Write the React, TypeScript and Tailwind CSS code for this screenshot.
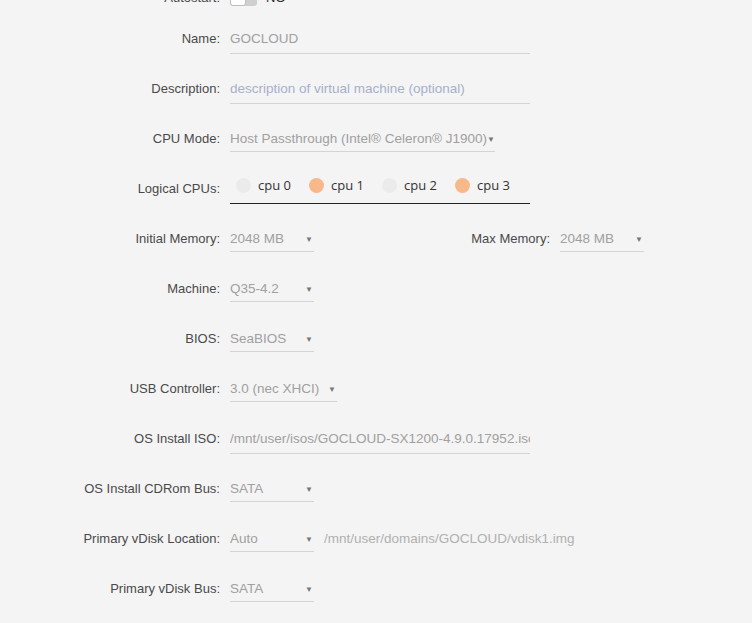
import React from "react";

const font = { fontFamily: '"Liberation Sans", Arial, sans-serif' };

function Label({ children }: { children: React.ReactNode }) {
  return (
    <div className="w-[220px] shrink-0 text-right text-[13px] text-[#4a4a4a]">{children}</div>
  );
}

function Select({ value, width }: { value: string; width: string }) {
  return (
    <div className={`${width} ml-[10px] h-[26px] pt-[2px] flex items-center justify-between border-b border-[#d4d4d4] text-[13.5px] text-[#a0a0a0]`}>
      <span className="whitespace-nowrap">{value}</span>
      <span className="text-[8px] text-[#777] pr-[1px]">▼</span>
    </div>
  );
}

function Text({ value, color = "text-[#a0a0a0]" }: { value: string; color?: string }) {
  return (
    <div className={`w-[300px] ml-[10px] h-[29px] pt-[2px] flex items-center overflow-hidden border-b border-[#d4d4d4] text-[13.5px] ${color}`}>
      <span className="whitespace-nowrap">{value}</span>
    </div>
  );
}

function Row({ children, h = "h-[50px]" }: { children: React.ReactNode; h?: string }) {
  return <div className={`flex items-center ${h}`}>{children}</div>;
}

function Cpu({ on, label }: { on: boolean; label: string }) {
  return (
    <div className="flex items-center">
      <span className={`w-[15px] h-[15px] rounded-full ${on ? "bg-[#f8b88a]" : "bg-[#ebebeb]"}`} />
      <span
        className="ml-[7px] w-[51px] text-[13px] text-[#333]"
        style={{ fontFamily: '"Open Sans", sans-serif' }}
      >
        {label}
      </span>
    </div>
  );
}

export default function App() {
  return (
    <div className="w-[752px] h-[623px] overflow-hidden bg-[#f4f4f4]" style={font}>
      <div className="-mt-[18px]">
        <Row h="h-[32px]">
          <Label>Autostart:</Label>
          <div className="ml-[10px] flex items-center">
            <div className="w-[27px] h-[16px] rounded-[3px] bg-[#cfcfcf] flex items-center">
              <div className="w-[16px] h-[16px] rounded-[3px] bg-white border border-[#bdbdbd]" />
            </div>
            <span className="ml-[9px] text-[13px] text-[#333]">NO</span>
          </div>
        </Row>
        <Row>
          <Label>Name:</Label>
          <Text value="GOCLOUD" />
        </Row>
        <Row>
          <Label>Description:</Label>
          <Text value="description of virtual machine (optional)" color="text-[#a6b0cc]" />
        </Row>
        <Row>
          <Label>CPU Mode:</Label>
          <Select value="Host Passthrough (Intel® Celeron® J1900)" width="w-[265px]" />
        </Row>
        <Row>
          <Label>Logical CPUs:</Label>
          <div className="ml-[10px] w-[300px] h-[30px] border-b border-[#222] flex items-center pl-[6px] pb-[6px]">
            <Cpu on={false} label="cpu 0" />
            <Cpu on={true} label="cpu 1" />
            <Cpu on={false} label="cpu 2" />
            <Cpu on={true} label="cpu 3" />
          </div>
        </Row>
        <Row>
          <Label>Initial Memory:</Label>
          <Select value="2048 MB" width="w-[84px]" />
          <div className="w-[236px] shrink-0 text-right text-[13px] text-[#4a4a4a]">Max Memory:</div>
          <Select value="2048 MB" width="w-[84px]" />
        </Row>
        <Row>
          <Label>Machine:</Label>
          <Select value="Q35-4.2" width="w-[84px]" />
        </Row>
        <Row>
          <Label>BIOS:</Label>
          <Select value="SeaBIOS" width="w-[84px]" />
        </Row>
        <Row>
          <Label>USB Controller:</Label>
          <Select value="3.0 (nec XHCI)" width="w-[107px]" />
        </Row>
        <Row>
          <Label>OS Install ISO:</Label>
          <Text value="/mnt/user/isos/GOCLOUD-SX1200-4.9.0.17952.iso" />
        </Row>
        <Row>
          <Label>OS Install CDRom Bus:</Label>
          <Select value="SATA" width="w-[84px]" />
        </Row>
        <Row>
          <Label>Primary vDisk Location:</Label>
          <Select value="Auto" width="w-[84px]" />
          <span className="ml-[10px] text-[13.5px] text-[#b0b0b0] whitespace-nowrap">
            /mnt/user/domains/GOCLOUD/vdisk1.img
          </span>
        </Row>
        <Row>
          <Label>Primary vDisk Bus:</Label>
          <Select value="SATA" width="w-[84px]" />
        </Row>
      </div>
    </div>
  );
}
